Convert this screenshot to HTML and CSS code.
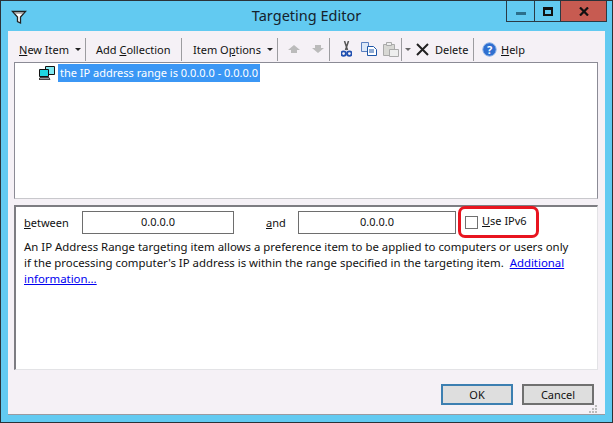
FILE: index.html
```html
<!DOCTYPE html>
<html lang="en">
<head>
<meta charset="utf-8">
<title>Targeting Editor</title>
<link rel="stylesheet" href="styles.css">
</head>
<body>
<div class="window">
  <header class="titlebar">
    <svg class="filter-icon" width="16" height="15" viewBox="0 0 16 15"><path d="M1.500 1.500h13L9.500 7v6l-3-1.500V7z" fill="#fff" stroke="#222" stroke-width="1.300"/><path d="M3.500 3h9" stroke="#777"/></svg>
    <h1 class="title">Targeting Editor</h1>
    <div class="controls">
      <div class="ctl ctl-min"><span class="min-glyph"></span></div>
      <div class="ctl ctl-max"><span class="max-glyph"></span></div>
      <div class="ctl ctl-close"><svg width="10" height="9" viewBox="0 0 10 9"><path d="M1 .5l8 8M9 .5l-8 8" stroke="#111" stroke-width="2.200"/></svg></div>
    </div>
  </header>
  <main class="client">
    <nav class="toolbar">
      <span class="tool tool-new"><span><u>N</u>ew Item</span><i class="caret"></i></span>
      <span class="sep"></span>
      <span class="tool tool-add"><span>Add <u>C</u>ollection</span></span>
      <span class="sep"></span>
      <span class="tool tool-options"><span>Item O<u>p</u>tions</span><i class="caret"></i></span>
      <span class="sep"></span>
      <span class="tool tool-arrows">
        <svg width="12" height="9" viewBox="0 0 12 9"><path d="M6 0l6 5H9v3H3V5H0z" fill="#bbb"/></svg>
        <svg width="12" height="9" viewBox="0 0 12 9"><path d="M3 0h6v3h3L6 8 0 3h3z" fill="#bbb"/></svg>
      </span>
      <span class="sep"></span>
      <span class="tool tool-clip">
        <svg class="scissors" width="11" height="16" viewBox="0 0 11 16"><path d="M3.500 0l3 9M7.500 0l-3 9" stroke="#555" stroke-width="1.500"/><circle cx="2.600" cy="12.600" r="2.300" fill="none" stroke="#1f4fb0" stroke-width="1.800"/><circle cx="8.400" cy="12.600" r="2.300" fill="none" stroke="#1f4fb0" stroke-width="1.800"/></svg>
        <svg width="16" height="14" viewBox="0 0 16 14"><path d="M.5.5h7v9h-7z" fill="#dce8f8" stroke="#5a7fc0"/><path d="M6.500 4.500h6l3 3v6h-9z" fill="#fff" stroke="#1f57a8"/><path d="M8 8h5M8 10h5" stroke="#1f57a8"/></svg>
        <svg width="16" height="15" viewBox="0 0 16 15"><path d="M.5 2.500h11v11H.5z" fill="#d8d8d4" stroke="#aaa"/><path d="M3.500.5h5v3h-5z" fill="#eee" stroke="#aaa"/><path d="M6.500 7.500h9v7h-9z" fill="#eee" stroke="#aaa"/></svg>
      </span>
      <span class="sep"></span>
      <i class="caret caret-gray"></i>
      <span class="tool tool-delete">
        <svg width="13" height="13" viewBox="0 0 13 13"><path d="M1 1l11 11M12 1L1 12" stroke="#222" stroke-width="2"/></svg>
        <span>Delete</span>
      </span>
      <span class="sep"></span>
      <span class="tool tool-help">
        <svg width="15" height="15" viewBox="0 0 15 15"><circle cx="7.500" cy="7.500" r="6.700" fill="#2f6fd0" stroke="#8fb4e8"/><text x="7.500" y="11.500" class="help-q">?</text></svg>
        <span><u>H</u>elp</span>
      </span>
    </nav>
    <section class="tree">
      <div class="tree-row">
        <svg class="pc-icon" width="16" height="14" viewBox="0 0 16 14"><path d="M6.500.5h9v8h-9z" fill="#7fe8f0" stroke="#111"/><path d="M.5 3.500h9v7h-9z" fill="#1fd8e0" stroke="#111"/><path d="M1 11.500h9l1 2H0z" fill="#999" stroke="#222" stroke-width=".8"/></svg>
        <span class="tree-label">the IP address range is 0.0.0.0 - 0.0.0.0</span>
      </div>
    </section>
    <section class="props">
      <div class="range-row">
        <label class="lbl-between"><u>b</u>etween</label>
        <div class="field field-a">0.0.0.0</div>
        <label class="lbl-and"><u>a</u>nd</label>
        <div class="field field-b">0.0.0.0</div>
        <span class="check"></span>
        <label class="lbl-ipv6"><u>U</u>se IPv6</label>
      </div>
      <p class="desc">An IP Address Range targeting item allows a preference item to be applied to computers or users only<br>if the processing computer's IP address is within the range specified in the targeting item.&nbsp; <a href="#">Additional<br>information...</a></p>
      <div class="callout"></div>
    </section>
    <footer class="actions">
      <button class="btn btn-default">OK</button>
      <button class="btn">Cancel</button>
      <svg class="grip" width="8" height="8" viewBox="0 0 8 8"><path d="M6 0h2v2H6zM3 3h2v2H3zM6 3h2v2H6zM0 6h2v2H0zM3 6h2v2H3zM6 6h2v2H6z" fill="#bbb"/></svg>
    </footer>
  </main>
</div>
</body>
</html>
```

FILE: styles.css
```css
* { box-sizing: border-box; }
html, body { margin: 0; height: 100%; }
body { font-family: "Noto Sans", "Open Sans", sans-serif; font-size: 11px; color: #111; overflow: hidden; }
.window { width: 613px; height: 423px; background: #62caf1; border: 1px solid #2a3238; padding: 0 7px 7px; display: flex; flex-direction: column; }
.titlebar { height: 30px; flex: none; display: flex; align-items: flex-start; position: relative; }
.filter-icon { margin: 9px 0 0 3px; }
.title { position: absolute; left: 0; right: 0; top: 4px; margin: 0; text-align: center; font-size: 14.500px; font-weight: 400; line-height: 20px; color: #15222c; }
.controls { position: absolute; right: -2px; top: 0; display: flex; height: 21px; border: 1px solid #2a3a44; border-top: 0; }
.ctl { display: flex; align-items: center; justify-content: center; border-left: 1px solid #2a3a44; }
.ctl:first-child { border-left: 0; }
.ctl-min { width: 27px; }
.ctl-max { width: 26px; }
.ctl-close { width: 46px; background: #c75b51; }
.min-glyph { width: 10px; height: 3px; background: #2b6f8c; margin-top: 4px; }
.max-glyph { width: 10px; height: 9px; border: 2px solid #111; border-top-width: 3px; }
.client { flex: 1; background: #f5f1f6; display: flex; flex-direction: column; border-bottom: 1px solid #9a9aa0; padding: 0 7px 0 6px; }
.toolbar { height: 31px; flex: none; display: flex; align-items: center; padding: 5px 0 0 5px; white-space: nowrap; }
.tool { display: inline-flex; align-items: center; }
.sep { width: 1px; height: 23px; background: #9c9ca0; flex: none; }
.caret { display: inline-block; width: 0; height: 0; border: 3px solid transparent; border-top: 3px solid #222; border-bottom: 0; margin-left: 6px; }
.caret-gray { border-width: 3.500px; border-bottom: 0; border-top-color: #666; margin: 0 5px 0 3px; }
.tool-new { width: 66px; }
.tool-add { margin-left: 10px; width: 85px; }
.tool-options { margin-left: 11px; width: 84px; }
.tool-arrows { margin-left: 10px; width: 41px; gap: 12px; }
.tool-clip { margin-left: 11px; width: 60px; gap: 6px; }
.scissors { margin-right: 3px; }
.tool-delete { width: 57px; gap: 6px; }
.tool-help { margin-left: 8px; gap: 4px; }
.help-q { font-size: 11px; font-weight: 700; fill: #fff; text-anchor: middle; }
.tree { height: 137px; flex: none; background: #fff; border: 1px solid #8b8b95; border-bottom-color: #c8c8cc; padding: 1px 0 0 24px; }
.tree-row { display: flex; align-items: center; gap: 3px; }
.pc-icon { flex: none; }
.tree-label { background: #3b97f5; color: #fff; height: 18px; line-height: 17px; padding: 0 2px; }
.props { position: relative; margin-top: 6px; height: 165px; flex: none; background: #fff; border-top: 2px solid #7d7d82; border-left: 2px solid #7d7d82; border-right: 1px solid #e3e3e6; border-bottom: 1px solid #e3e3e6; padding: 4px 0 0 8px; }
.range-row { display: flex; align-items: center; height: 23px; }
.lbl-between { width: 58px; }
.field { height: 23px; border: 1px solid #6e6e6e; text-align: center; line-height: 20px; }
.field-a { width: 152px; }
.lbl-and { margin-left: 32px; width: 32px; }
.field-b { width: 158px; }
.check { width: 13px; height: 13px; border: 1px solid #707070; margin-left: 9px; }
.lbl-ipv6 { margin-left: 4px; margin-top: -4px; }
.desc { margin: 5px 0 0; line-height: 16px; font-size: 11.400px; }
.desc a { color: #0000f0; }
.callout { position: absolute; left: 442px; top: -1px; width: 81px; height: 32px; border: 3px solid #e8141f; border-radius: 7px; }
.actions { flex: 1; display: flex; justify-content: flex-end; align-items: flex-start; gap: 9px; padding: 14px 4px 0 0; position: relative; }
.btn { width: 72px; height: 21px; background: #dedede; border: 1px solid #707070; font: inherit; color: #111; padding: 0; outline: 1px solid #707070; outline-offset: -2px; }
.btn-default { border-color: #3c7fb1; outline-color: #3c7fb1; }
.grip { position: absolute; right: 1px; bottom: 1px; }
```
